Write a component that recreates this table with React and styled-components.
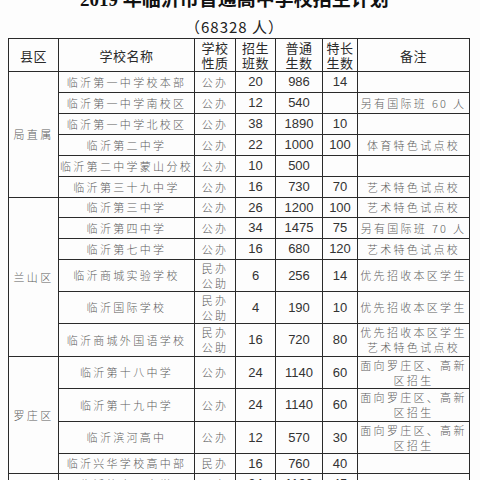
import React from "react";
import styled, { createGlobalStyle } from "styled-components";

const GlobalStyle = createGlobalStyle`
  html, body {
    margin: 0;
    padding: 0;
    background: #fdfdfd;
    overflow: hidden;
  }
  body {
    font-family: "Noto Sans CJK SC", sans-serif;
  }
`;

const Page = styled.div`
  width: 480px;
  height: 480px;
  padding: 0 8px;
  box-sizing: border-box;
  overflow: hidden;
`;

const Heading = styled.div`
  width: 461px;
  display: flex;
  flex-direction: column;
  align-items: center;
  padding-right: 8px;
  box-sizing: border-box;
`;

const Title = styled.h1`
  margin: -11px 0 0;
  height: 22px;
  font-family: "Liberation Serif", "Noto Sans CJK SC", serif;
  font-weight: 700;
  font-size: 19px;
  line-height: 22px;
  color: #111;
  white-space: nowrap;
`;

const Subtitle = styled.div`
  margin-top: 7px;
  height: 18px;
  font-family: "Noto Sans CJK SC", sans-serif;
  font-size: 15px;
  line-height: 18px;
  color: #222;
  letter-spacing: 1px;
  white-space: nowrap;
`;

const Table = styled.table`
  margin-top: 2px;
  width: 461px;
  table-layout: fixed;
  border-collapse: collapse;
  border: 1.5px solid #222;
`;

const Row = styled.tr`
  height: ${(p) => p.$h}px;
`;

const Cell = styled.td`
  border: 1px solid #2a2a2a;
  padding: 0;
  text-align: center;
  vertical-align: middle;
  overflow: hidden;
  white-space: nowrap;
  color: ${(p) => (p.$num ? "#333" : "#5e5e5e")};
  font-family: ${(p) =>
    p.$num
      ? `"Liberation Sans", "DejaVu Sans", sans-serif`
      : `"Noto Sans CJK SC", sans-serif`};
  font-weight: ${(p) => (p.$num ? 400 : 300)};
  font-size: ${(p) => (p.$num ? 13 : 11)}px;
  letter-spacing: ${(p) => (p.$num ? 0 : 2.3)}px;
  line-height: ${(p) => (p.$num ? 16 : 15)}px;
`;

const Head = styled.th`
  border: 1px solid #2a2a2a;
  padding: 0;
  text-align: center;
  vertical-align: middle;
  font-family: "Noto Sans CJK SC", sans-serif;
  font-weight: 400;
  font-size: 13px;
  letter-spacing: 0.5px;
  line-height: 15px;
  color: #2a2a2a;
`;

const cols = [50, 136, 41, 40, 47, 35, 112];

const groups = [
  {
    county: "局直属",
    rows: [
      ["临沂第一中学校本部", "公办", "20", "986", "14", "", 21],
      ["临沂第一中学南校区", "公办", "12", "540", "", "另有国际班 60 人", 21],
      ["临沂第一中学北校区", "公办", "38", "1890", "10", "", 21],
      ["临沂第二中学", "公办", "22", "1000", "100", "体育特色试点校", 21],
      ["临沂第二中学蒙山分校", "公办", "10", "500", "", "", 21],
      ["临沂第三十九中学", "公办", "16", "730", "70", "艺术特色试点校", 21],
    ],
  },
  {
    county: "兰山区",
    rows: [
      ["临沂第三中学", "公办", "26", "1200", "100", "艺术特色试点校", 20],
      ["临沂第四中学", "公办", "34", "1475", "75", "另有国际班 70 人", 21],
      ["临沂第七中学", "公办", "16", "680", "120", "艺术特色试点校", 21],
      ["临沂商城实验学校", "民办\n公助", "6", "256", "14", "优先招收本区学生", 32],
      ["临沂国际学校", "民办\n公助", "4", "190", "10", "优先招收本区学生", 32],
      ["临沂商城外国语学校", "民办\n公助", "16", "720", "80", "优先招收本区学生\n艺术特色试点校", 33],
    ],
  },
  {
    county: "罗庄区",
    rows: [
      ["临沂第十八中学", "公办", "24", "1140", "60", "面向罗庄区、高新\n区招生", 32],
      ["临沂第十九中学", "公办", "24", "1140", "60", "面向罗庄区、高新\n区招生", 33],
      ["临沂滨河高中", "公办", "12", "570", "30", "面向罗庄区、高新\n区招生", 32],
      ["临沂兴华学校高中部", "民办", "16", "760", "40", "", 20],
    ],
  },
  {
    county: "河东区",
    rows: [
      ["临沂第十一中学", "公办", "24", "1100", "45", "", 21],
      ["临沂第五中学", "公办", "20", "900", "40", "", 21],
      ["临沂第二十中学", "公办", "12", "540", "20", "", 21],
    ],
  },
];

const Lines = ({ text }) =>
  text.split("\n").map((t, i) => (
    <React.Fragment key={i}>
      {i > 0 && <br />}
      {t}
    </React.Fragment>
  ));

export default function App() {
  return (
    <Page>
      <GlobalStyle />
      <Heading>
        <Title>2019 年临沂市普通高中学校招生计划</Title>
        <Subtitle>（68328 人）</Subtitle>
      </Heading>
      <Table>
        <colgroup>
          {cols.map((w, i) => (
            <col key={i} style={{ width: w }} />
          ))}
        </colgroup>
        <thead>
          <Row $h={33}>
            <Head>县区</Head>
            <Head>学校名称</Head>
            <Head>
              学校
              <br />
              性质
            </Head>
            <Head>
              招生
              <br />
              班数
            </Head>
            <Head>
              普通
              <br />
              生数
            </Head>
            <Head>
              特长
              <br />
              生数
            </Head>
            <Head>备注</Head>
          </Row>
        </thead>
        <tbody>
          {groups.map((g) =>
            g.rows.map(([name, kind, cls, normal, special, note, h], i) => (
              <Row key={g.county + i} $h={h}>
                {i === 0 && <Cell rowSpan={g.rows.length}>{g.county}</Cell>}
                <Cell>{name}</Cell>
                <Cell>
                  <Lines text={kind} />
                </Cell>
                <Cell $num>{cls}</Cell>
                <Cell $num>{normal}</Cell>
                <Cell $num>{special}</Cell>
                <Cell>
                  <Lines text={note} />
                </Cell>
              </Row>
            ))
          )}
        </tbody>
      </Table>
    </Page>
  );
}
